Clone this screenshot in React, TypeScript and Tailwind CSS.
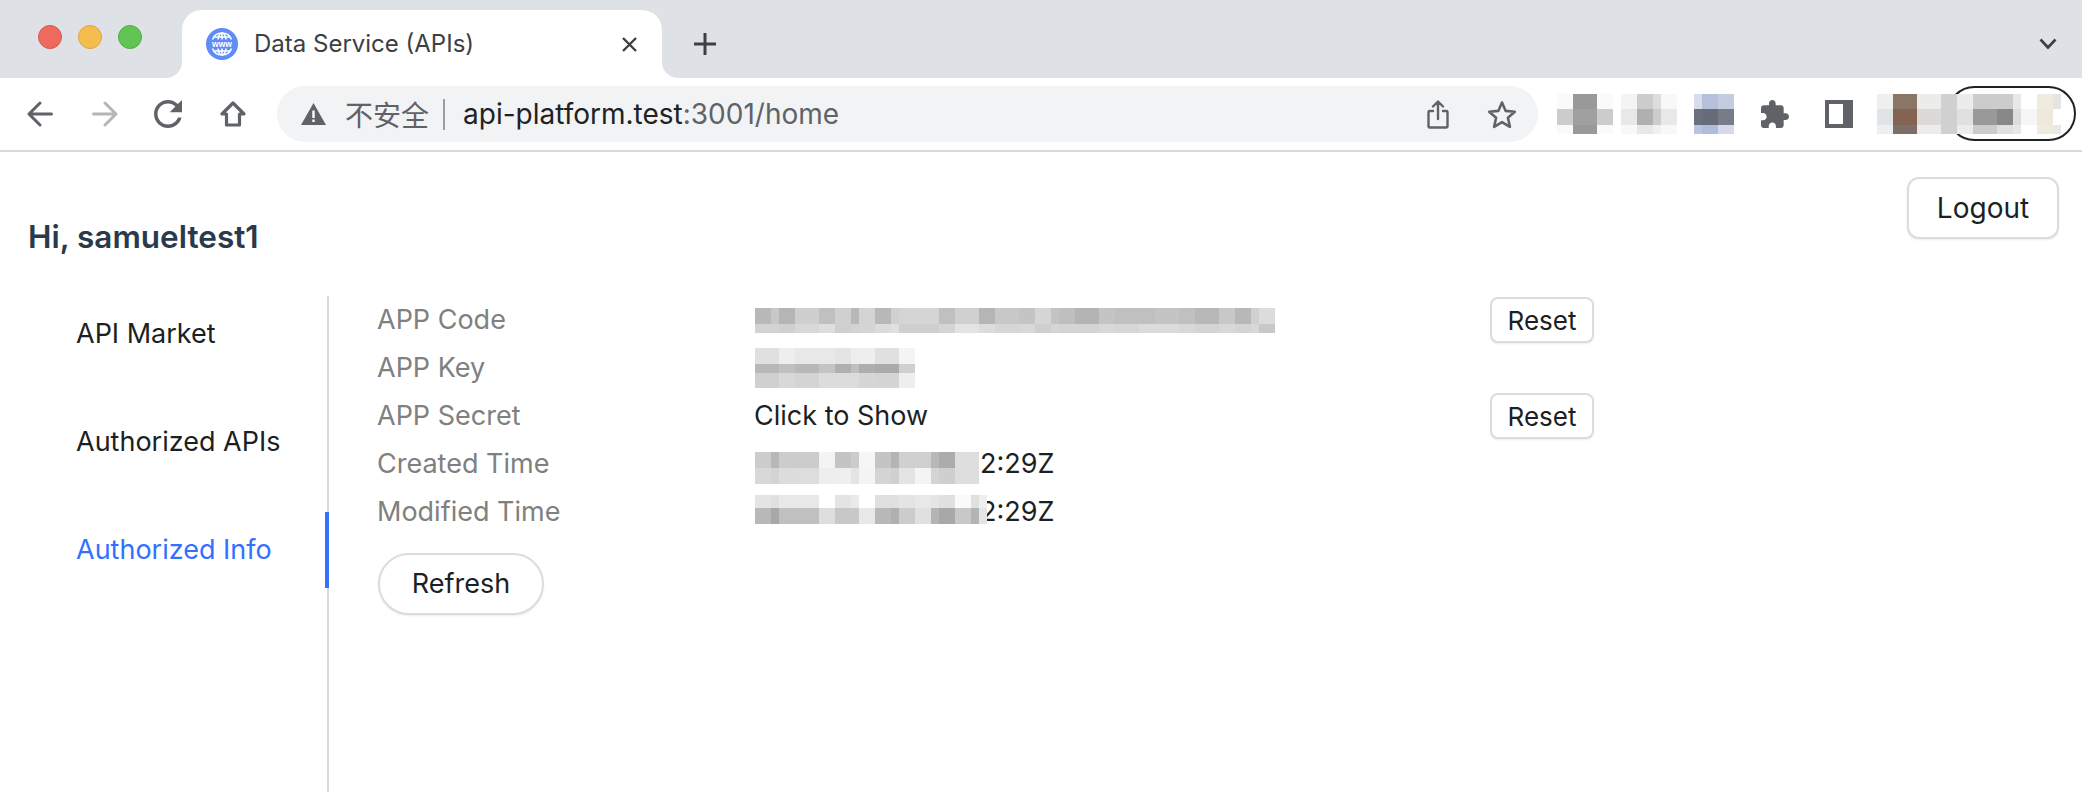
import { ReactNode } from "react";

type Col = [number, ...string[]];

// pixelated blocks that hide the private values in the screenshot
const Mosaic = ({ bands, cols, className = "" }: { bands: number[]; cols: Col[]; className?: string }) => (
  <div className={`flex ${className}`}>
    {cols.map(([width, ...colors], i) => (
      <div key={i} className="flex flex-col" style={{ width }}>
        {colors.map((color, j) => (
          <div key={j} style={{ height: bands[j], background: color }} />
        ))}
      </div>
    ))}
  </div>
);

const codeCols: Col[] = [
  [16, "#b9b9b9", "#d3d3d3"], [8, "#c8c8c8", "#d3d3d3"], [16, "#b5b5b5", "#d0d0d0"], [24, "#cfcfcf", "#d8d8d8"],
  [16, "#c0c0c0", "#dedede"], [16, "#d0d0d0", "#cfcfcf"], [8, "#b8b8b8", "#d3d3d3"], [16, "#d4d4d4", "#d5d5d5"],
  [16, "#b8b8b8", "#dcdcdc"], [8, "#d0d0d0", "#e0e0e0"], [40, "#d5d5d5", "#cfcfcf"], [16, "#c0c0c0", "#d5d5d5"],
  [24, "#d0d0d0", "#e4e4e4"], [16, "#b5b5b5", "#dcdcdc"], [24, "#c8c8c8", "#d6d6d6"],
  [16, "#c4c4c4", "#d8d8d8"], [16, "#d6d6d6", "#cfcfcf"], [8, "#c4c4c4", "#d6d6d6"], [16, "#bfbfbf", "#d4d4d4"],
  [24, "#b4b4b4", "#d4d4d4"], [16, "#c4c4c4", "#d8d8d8"], [24, "#c0c0c0", "#d6d6d6"], [16, "#c0c0c0", "#dcdcdc"],
  [24, "#c4c4c4", "#dcdcdc"], [16, "#c0c0c0", "#d8d8d8"], [24, "#b8b8b8", "#d4d4d4"], [16, "#c8c8c8", "#d8d8d8"],
  [16, "#b8b8b8", "#d4d4d4"], [8, "#d0d0d0", "#d8d8d8"], [16, "#dcdcdc", "#c8c8c8"],
];

const keyCols: Col[] = [
  [24, "#e0e0e0", "#b8b8b8", "#d0d0d0"], [16, "#eeeeee", "#c0c0c0", "#d8d8d8"], [24, "#e8e8e8", "#b8b8b8", "#d4d4d4"],
  [16, "#e8e8e8", "#c4c4c4", "#dcdcdc"], [16, "#e4e4e4", "#b0b0b0", "#dcdcdc"], [8, "#ededed", "#c0c0c0", "#dcdcdc"],
  [16, "#eeeeee", "#aeaeae", "#d6d6d6"], [24, "#e0e0e0", "#aaaaaa", "#d4d4d4"], [16, "#f4f4f4", "#d0d0d0", "#eeeeee"],
];

const createdCols: Col[] = [
  [16, "#cccccc", "#d8d8d8"], [8, "#b8b8b8", "#d4d4d4"], [16, "#cccccc", "#dcdcdc"], [24, "#cccccc", "#dddddd"],
  [16, "#f4f4f4", "#eeeeee"], [16, "#c4c4c4", "#efefef"], [8, "#cccccc", "#e4e4e4"], [16, "#f6f6f6", "#f4f4f4"],
  [16, "#c4c4c4", "#d4d4d4"], [8, "#b4b4b4", "#d0d0d0"], [16, "#d0d0d0", "#e4e4e4"], [16, "#d0d0d0", "#f4f4f4"],
  [8, "#b8b8b8", "#d4d4d4"], [16, "#acacac", "#cfcfcf"], [24, "#dedede", "#dedede"],
];

const modifiedCols: Col[] = [
  [16, "#e4e4e4", "#b8b8b8"], [8, "#e0e0e0", "#a8a8a8"], [16, "#e8e8e8", "#c0c0c0"], [24, "#e8e8e8", "#c0c0c0"],
  [16, "#ffffff", "#dedede"], [16, "#e4e4e4", "#c8c8c8"], [8, "#eaeaea", "#c8c8c8"], [16, "#ffffff", "#e8e8e8"],
  [16, "#e0e0e0", "#b8b8b8"], [8, "#e0e0e0", "#b0b0b0"], [16, "#e4e4e4", "#cccccc"], [16, "#e8e8e8", "#e0e0e0"],
  [8, "#e4e4e4", "#b4b4b4"], [16, "#e0e0e0", "#a8a8a8"], [16, "#fafafa", "#c8c8c8"], [8, "#e0e0e0", "#b4b4b4"],
  [8, "#eeeeee", "#e4e4e4"],
];

const extBands = [15, 16, 9];

const ext1: Col[] = [[16, "#fafafa", "#cccccc", "#fafafa"], [24, "#999999", "#a0a0a0", "#999999"], [16, "#fafafa", "#cccccc", "#fafafa"]];
const ext2: Col[] = [[16, "#f4f4f4", "#e8e8e8", "#f8f8f8"], [16, "#cccccc", "#b0b0b0", "#e8e8e8"], [8, "#dddddd", "#cccccc", "#f0f0f0"], [16, "#f8f8f8", "#e8e8e8", "#f8f8f8"]];
const ext3: Col[] = [[8, "#d8dcec", "#6a7080", "#b8c4e0"], [16, "#b4c0dc", "#686c78", "#b0bcdc"], [16, "#c4cce0", "#787c88", "#d4daec"]];
const avatar: Col[] = [
  [16, "#efefef", "#e0e4e6", "#eeeeee"], [24, "#8b7565", "#846353", "#7c6e68"], [24, "#ececea", "#dcdad6", "#ececec"],
  [16, "#d0d0d0", "#d0d0d0", "#d0d0d0"], [16, "#ececec", "#e0e0e0", "#ececec"], [24, "#cccccc", "#999999", "#cccccc"],
  [16, "#cccccc", "#888888", "#e0e0e0"], [8, "#e8e8e8", "#dddddd", "#e8e8e8"], [16, "#ffffff", "#f6f6f6", "#ffffff"],
  [16, "#f0ebe0", "#f0e8dc", "#f0ebe0"], [8, "#e4e4e4", "#ffffff", "#e8e8e8"],
];

const Favicon = () => (
  <svg width="32" height="32" viewBox="0 0 32 32" className="shrink-0">
    <circle cx="16" cy="16" r="16" fill="#5f8cf5" />
    <g fill="none" stroke="#fff" strokeWidth="1.6">
      <path d="M6.5 11.5C8 7.500 11.500 5 16 5s8 2.500 9.500 6.500M6.500 20.500C8 24.500 11.500 27 16 27s8-2.500 9.500-6.500" />
      <path d="M12 11.500C12.500 8 14 5 16 5s3.500 3 4 6.500M12 20.500c.5 3.500 2 6.500 4 6.500s3.500-3 4-6.500M16 5v6.500M16 20.500V27M8 9h16M8 23h16" />
    </g>
    <text x="16" y="19" textAnchor="middle" fontSize="8.500" fontWeight="700" fill="#fff" fontFamily="Liberation Sans, sans-serif">www</text>
  </svg>
);

const NavArrow = ({ flip, color }: { flip?: boolean; color: string }) => (
  <svg width="26" height="26" viewBox="0 0 26 26" fill="none" stroke={color} strokeWidth="3" strokeLinecap="round" strokeLinejoin="round" className={flip ? "-scale-x-100" : ""}>
    <path d="M24.500 13H2M13 2 2 13l11 11" />
  </svg>
);

const Reset = () => (
  <button className="w-[104px] h-[46px] rounded-[8px] border-2 border-[#dcdcdc] bg-white text-[26px] text-[#1c1f23] shadow-[0_1px_2px_rgba(0,0,0,0.08)]">Reset</button>
);

const Row = ({ label, children, action }: { label: string; children?: ReactNode; action?: ReactNode }) => (
  <div className="flex items-center h-12">
    <div className="w-[377px] text-[27px] text-[#808080]">{label}</div>
    <div className="w-[736px] relative text-[27px] text-[#1c1f23]">{children}</div>
    {action}
  </div>
);

export default function App() {
  return (
    <div className="w-[2082px] h-[792px] overflow-hidden bg-white flex flex-col font-['Inter',sans-serif]">
      {/* tab strip */}
      <div className="h-[78px] shrink-0 bg-[#dee1e6] flex items-end">
        <div className="flex gap-4 ml-[38px] mr-10 self-start mt-[25px]">
          <span className="w-6 h-6 rounded-full bg-[#ee6a5f] border border-[#d9574c]" />
          <span className="w-6 h-6 rounded-full bg-[#f5bd4f] border border-[#dea53a]" />
          <span className="w-6 h-6 rounded-full bg-[#61c454] border border-[#50ae44]" />
        </div>
        <div className="relative w-[480px] h-[68px] bg-white rounded-t-[20px] flex items-center pl-6 pr-[25px]">
          <span className="absolute -left-4 bottom-0 w-4 h-4 bg-white">
            <span className="block w-4 h-4 bg-[#dee1e6] rounded-br-2xl" />
          </span>
          <span className="absolute -right-4 bottom-0 w-4 h-4 bg-white">
            <span className="block w-4 h-4 bg-[#dee1e6] rounded-bl-2xl" />
          </span>
          <Favicon />
          <span className="ml-4 text-[24px] text-[#3c4043]">Data Service (APIs)</span>
          <svg width="15" height="15" viewBox="0 0 15 15" className="ml-auto" stroke="#3c4043" strokeWidth="2.400">
            <path d="M1 1l13 13M14 1 1 14" />
          </svg>
        </div>
        <svg width="24" height="24" viewBox="0 0 24 24" className="ml-[31px] mb-[22px]" stroke="#3c4043" strokeWidth="3">
          <path d="M12 1v22M1 12h22" />
        </svg>
        <svg width="18" height="12" viewBox="0 0 18 12" fill="none" className="ml-auto mr-[25px] mb-[28px]" stroke="#3c4043" strokeWidth="2.600">
          <path d="M1.500 1.500 9 9.500l7.500-8" />
        </svg>
      </div>

      {/* toolbar */}
      <div className="h-[74px] shrink-0 border-b-2 border-[#d9d9d9] flex items-center">
        <div className="flex items-center ml-[27px]">
          <NavArrow color="#5f6368" />
          <div className="ml-[39px]"><NavArrow flip color="#b4b6b9" /></div>
          <svg width="42" height="42" viewBox="0 0 24 24" fill="#5f6368" className="ml-[29px]">
            <path d="M17.650 6.350C16.200 4.900 14.210 4 12 4c-4.420 0-7.990 3.580-7.990 8s3.570 8 7.990 8c3.730 0 6.840-2.550 7.730-6h-2.080c-.82 2.330-3.040 4-5.650 4-3.310 0-6-2.690-6-6s2.690-6 6-6c1.660 0 3.140.69 4.220 1.780L13 11h7V4l-2.350 2.350z" />
          </svg>
          <svg width="26" height="26" viewBox="0 0 26 26" fill="none" stroke="#5f6368" strokeWidth="3.200" strokeLinejoin="round" className="ml-[31px]">
            <path d="M13 2 2 13h4.500v11h13V13H24z" />
          </svg>
        </div>
        <div className="ml-[31px] w-[1261px] h-14 rounded-[28px] bg-[#f1f3f4] flex items-center pl-6 pr-[21px]">
          <svg width="25" height="22" viewBox="0 0 25 22">
            <path d="M12.500 0 25 22H0z" fill="#5f6368" />
            <path d="M11.300 7.500h2.400v7.500h-2.400zM11.300 16.500h2.400V19h-2.400z" fill="#fff" />
          </svg>
          <span className="ml-[19px] text-[28px] text-[#5f6368] font-['Noto_Sans_CJK_SC',sans-serif]">不安全</span>
          <span className="ml-[14px] w-0.5 h-[31px] bg-[#9a9ca0]" />
          <span className="ml-[18px] text-[28px] text-[#202124]">api-platform.test<span className="text-[#5f6368]">:3001/home</span></span>
          <svg width="22" height="29" viewBox="0 0 22 29" fill="none" stroke="#5f6368" strokeWidth="2.400" strokeLinecap="round" strokeLinejoin="round" className="ml-auto">
            <path d="M6 11H2.500a1 1 0 0 0-1 1v14a1.500 1.500 0 0 0 1.500 1.500h16a1.500 1.500 0 0 0 1.500-1.500V12a1 1 0 0 0-1-1H16M11 19V2M6 6.500 11 1.500l5 5" />
          </svg>
          <svg width="30" height="29" viewBox="0 0 30 29" fill="none" stroke="#5f6368" strokeWidth="2.600" strokeLinejoin="round" className="ml-[38px]">
            <path d="M15 2.500l3.700 8.400 9.100.9-6.900 6 2 9-7.900-4.700-7.900 4.700 2-9-6.900-6 9.100-.9z" />
          </svg>
        </div>
        <div className="relative flex-1 h-14 flex items-center">
          <Mosaic bands={extBands} cols={ext1} className="ml-[19px]" />
          <Mosaic bands={extBands} cols={ext2} className="ml-2" />
          <Mosaic bands={extBands} cols={ext3} className="ml-[17px]" />
          <svg width="28" height="28" viewBox="2 1 21 21" fill="#5f6368" className="ml-[27px]">
            <path d="M20.500 11H19V7c0-1.100-.9-2-2-2h-4V3.500C13 2.120 11.880 1 10.500 1S8 2.120 8 3.500V5H4c-1.100 0-1.990.9-1.990 2v3.800H3.500c1.490 0 2.700 1.210 2.700 2.700s-1.210 2.700-2.700 2.700H2V20c0 1.100.9 2 2 2h3.800v-1.500c0-1.490 1.210-2.700 2.700-2.700 1.490 0 2.700 1.210 2.700 2.700V22H17c1.100 0 2-.9 2-2v-4h1.500c1.380 0 2.500-1.120 2.500-2.500S21.880 11 20.500 11z" />
          </svg>
          <div className="ml-9 w-7 h-7 border-[#5f6368] border-y-4 border-l-4 border-r-[10px] bg-white" />
          <div className="absolute left-[409px] top-0 w-[129px] h-[55px] rounded-[28px] border-2 border-[#222222]" />
          <Mosaic bands={extBands} cols={avatar} className="relative ml-6" />
        </div>
      </div>

      {/* page */}
      <div className="flex justify-between h-[144px] shrink-0">
        <h1 className="ml-7 mt-[67px] text-[31.500px] leading-9 font-semibold text-[#2a3a4d]">Hi, samueltest1</h1>
        <button className="mt-[25px] mr-[23px] w-[152px] h-[62px] rounded-[12px] border-2 border-[#dcdcdc] bg-white text-[28px] text-[#1c1f23] shadow-[0_1px_2px_rgba(0,0,0,0.08)]">Logout</button>
      </div>
      <div className="flex flex-1 min-h-0">
        <nav className="w-[329px] shrink-0 border-r-2 border-[#d9d9d9] flex flex-col gap-8">
          <div className="h-[76px] flex items-center pl-[76px] text-[27px] text-[#1c1f23]">API Market</div>
          <div className="h-[76px] flex items-center pl-[76px] text-[27px] text-[#1c1f23]">Authorized APIs</div>
          <div className="relative h-[76px] flex items-center pl-[76px] text-[27px] text-[#3370ff]">
            Authorized Info
            <span className="absolute -right-[2px] top-0 w-1 h-full bg-[#3370ff]" />
          </div>
        </nav>
        <div className="pl-12">
          <Row label="APP Code" action={<Reset />}>
            <Mosaic bands={[16, 9]} cols={codeCols} className="ml-px" />
          </Row>
          <Row label="APP Key">
            <Mosaic bands={[16, 9, 15]} cols={keyCols} className="ml-px" />
          </Row>
          <Row label="APP Secret" action={<Reset />}>Click to Show</Row>
          <Row label="Created Time">
            <div className="pl-[226px]">2:29Z</div>
            <Mosaic bands={[16, 16]} cols={createdCols} className="absolute left-px top-2" />
          </Row>
          <Row label="Modified Time">
            <div className="pl-[226px]">2:29Z</div>
            <Mosaic bands={[13, 16]} cols={modifiedCols} className="absolute left-px top-[3px]" />
          </Row>
          <button className="mt-[17px] ml-px w-[166px] h-[62px] rounded-[31px] border-2 border-[#dcdcdc] bg-white text-[27px] text-[#1c1f23] shadow-[0_1px_2px_rgba(0,0,0,0.08)]">Refresh</button>
        </div>
      </div>
    </div>
  );
}
